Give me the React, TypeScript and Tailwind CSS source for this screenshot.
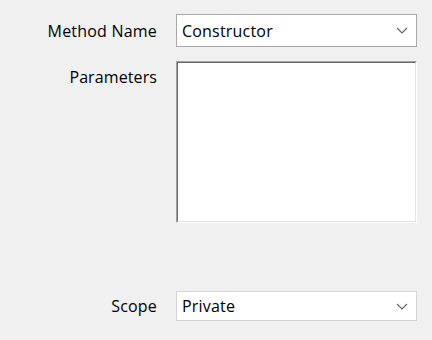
import React from "react";

function Chevron() {
  return (
    <svg width="12" height="7" viewBox="0 0 12 7" className="shrink-0">
      <polyline points="1,1 6,6 11,1" fill="none" stroke="#606060" strokeWidth="1.1" />
    </svg>
  );
}

function Select({ value, border }: { value: string; border: string }) {
  return (
    <div className={`flex h-full items-center justify-between bg-white pl-[5px] pr-[8px] border ${border}`}>
      <span className="text-[16px] leading-none tracking-[0.2px] text-black">{value}</span>
      <Chevron />
    </div>
  );
}

export default function App() {
  return (
    <div
      className="w-[432px] h-[340px] bg-[#f0f0f0] pt-[14px]"
      style={{ fontFamily: '"Open Sans", "Noto Sans", sans-serif' }}
    >
      <div className="grid grid-cols-[157px_241px] gap-x-[19px] grid-rows-[33px_162px_40px_30px] gap-y-[14px]">
        <div className="flex items-center justify-end text-[16px] tracking-[0.2px] text-black">Method Name</div>
        <div className="h-[33px]">
          <Select value="Constructor" border="border-[#a8a8a8]" />
        </div>
        <div className="flex justify-end pt-[5px] text-[16px] tracking-[0.1px] text-black leading-[22px]">Parameters</div>
        <div className="h-[162px] border border-t-[#a0a0a0] border-l-[#a0a0a0] border-r-white border-b-white">
          <div className="h-full border border-t-[#696969] border-l-[#696969] border-r-[#e3e3e3] border-b-[#e3e3e3] bg-white" />
        </div>
        <div />
        <div />
        <div className="flex items-center justify-end text-[16px] tracking-[0.2px] text-black">Scope</div>
        <div className="h-[30px]">
          <Select value="Private" border="border-[#d4d4d4]" />
        </div>
      </div>
    </div>
  );
}
